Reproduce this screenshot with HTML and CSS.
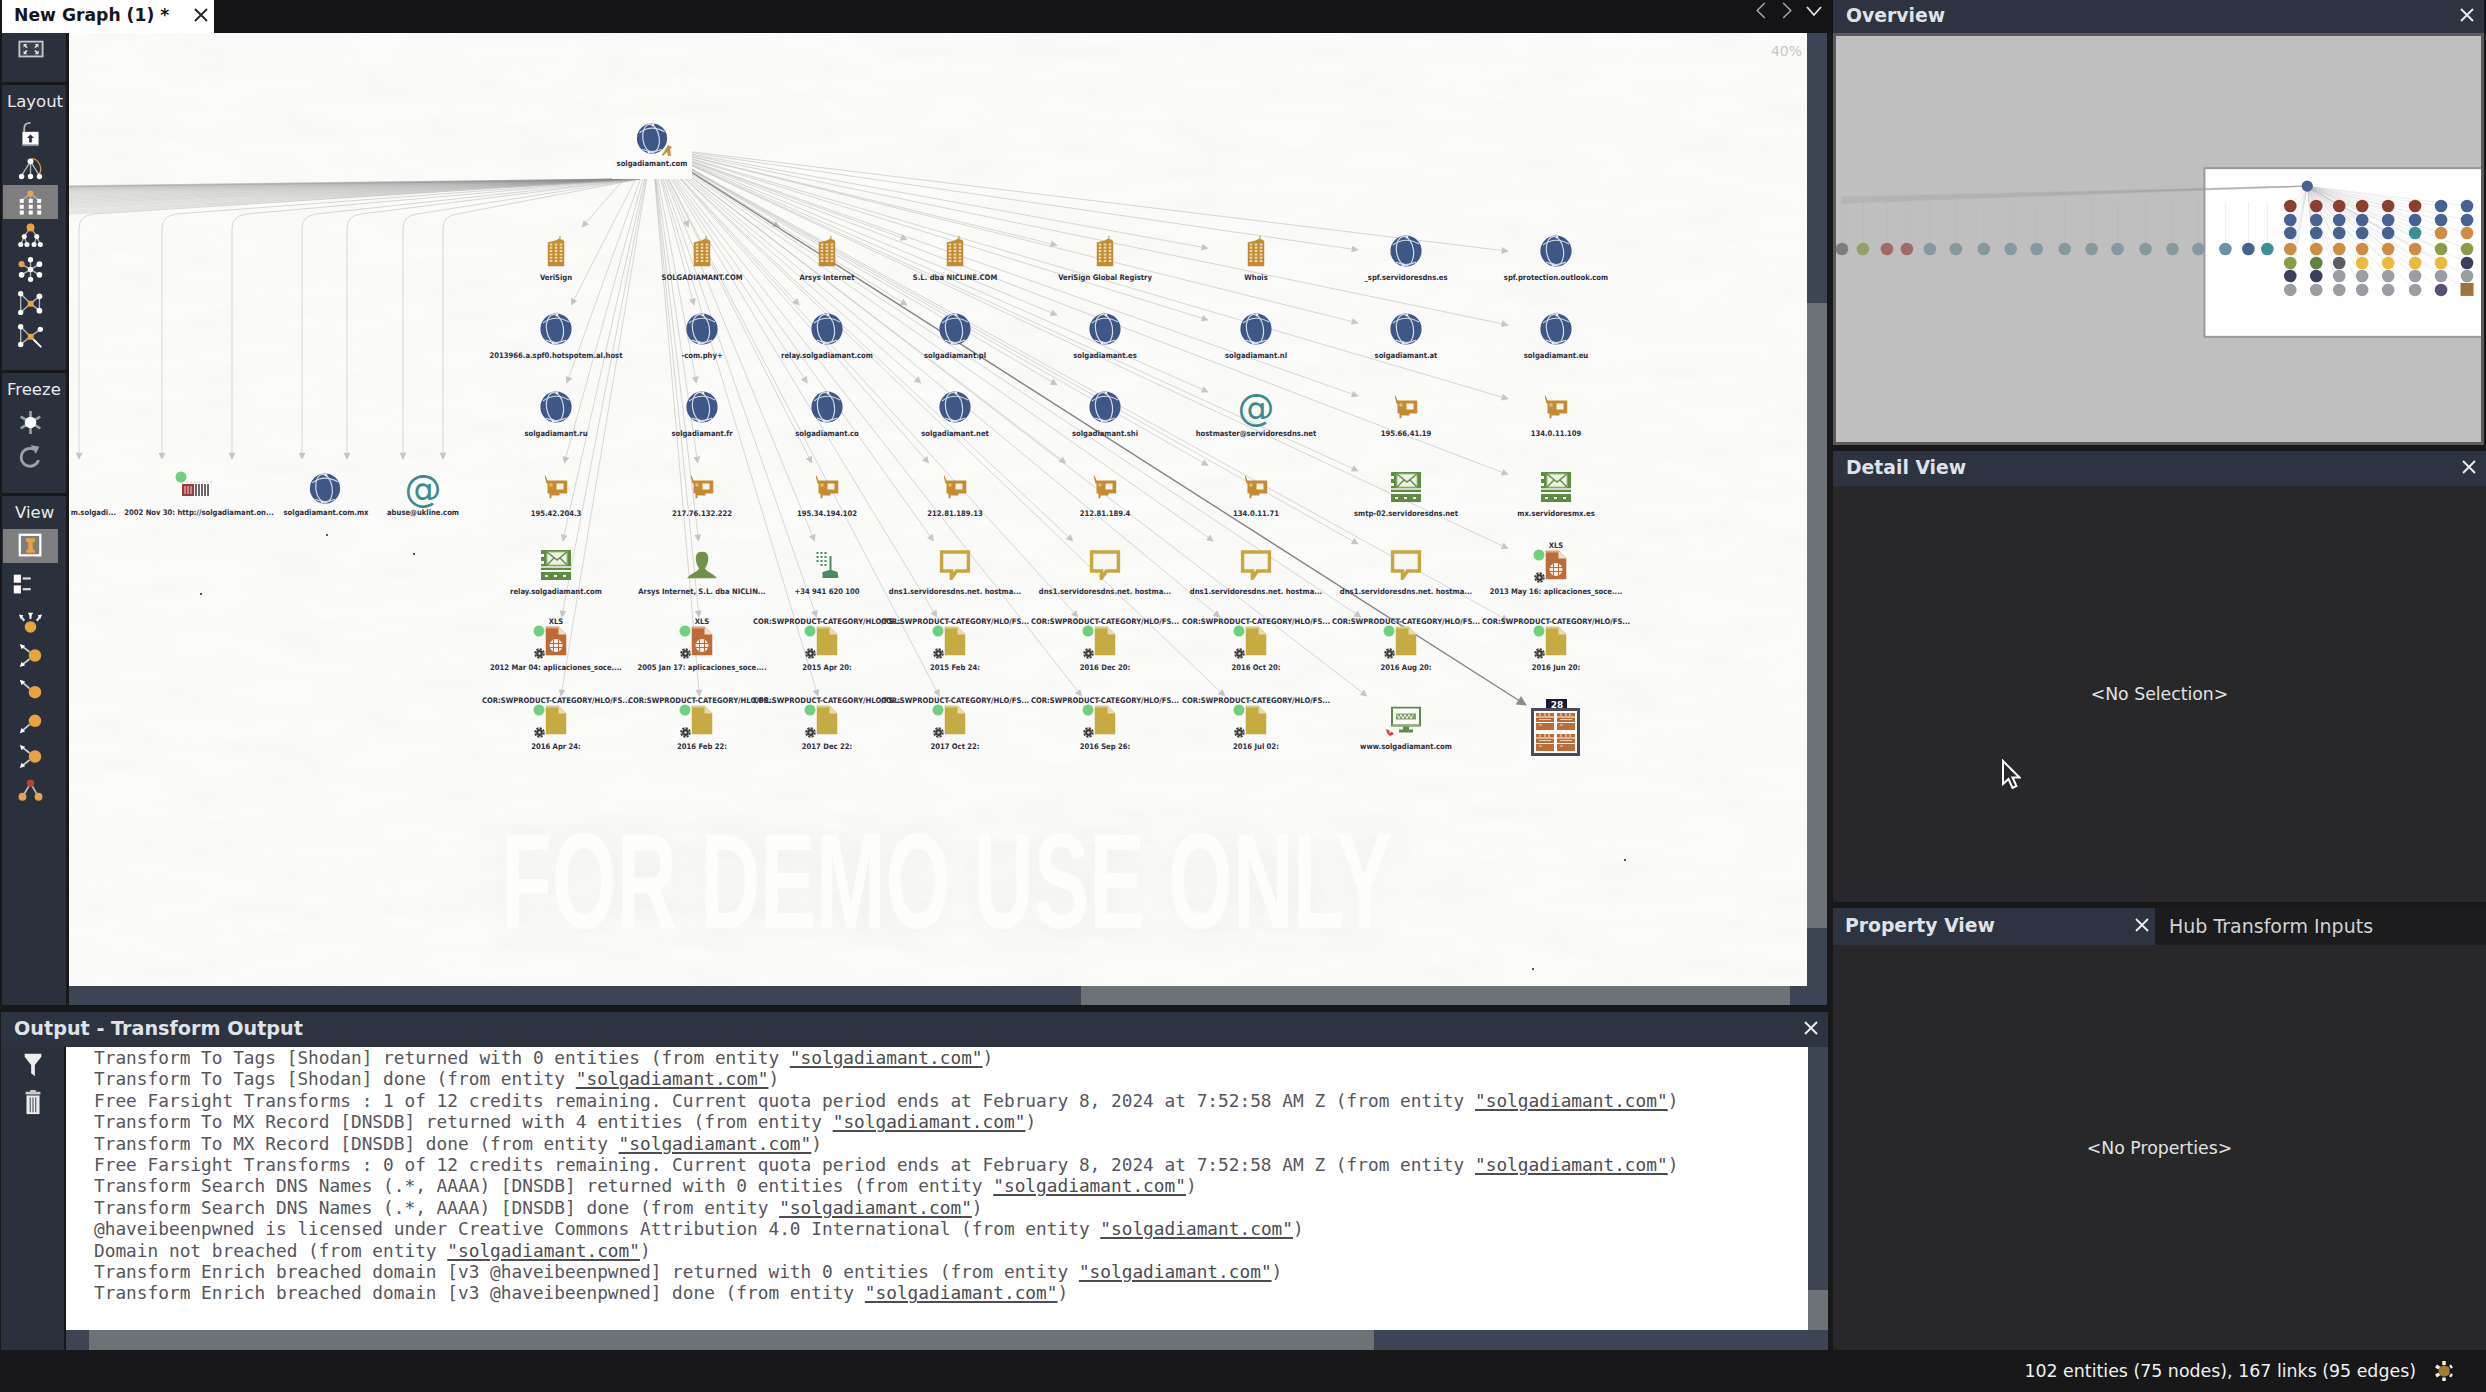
FILE: index.html
```html
<!DOCTYPE html>
<html lang="en">
<head>
    <meta charset="UTF-8">
    <title>New Graph (1) - Maltego</title>
    <link rel="stylesheet" href="styles.css">
</head>
<body>
    <!-- shared icons -->
    <svg class="icon-defs" aria-hidden="true">
        <defs>
            <filter id="paper" x="0" y="0" width="100%" height="100%">
                <feTurbulence type="fractalNoise" baseFrequency="0.012 0.05" numOctaves="4" seed="7"/>
                <feColorMatrix values="0 0 0 0 0.55  0 0 0 0 0.55  0 0 0 0 0.53  0 0 0 0.09 -0.03"/>
            </filter>
            <marker id="arrow" viewBox="0 0 10 10" refX="9" refY="5" markerWidth="9" markerHeight="7" markerUnits="userSpaceOnUse" orient="auto">
                <path d="M0 0L10 5L0 10z" fill="#c6c6c6"/>
            </marker>
            <marker id="arrow-dark" viewBox="0 0 10 10" refX="9" refY="5" markerWidth="11" markerHeight="10" markerUnits="userSpaceOnUse" orient="auto">
                <path d="M0 0L10 5L0 10z" fill="#8c8c8c"/>
            </marker>

            <!-- graph entity icons -->
            <symbol id="n-globe" viewBox="0 0 32 32">
                <circle cx="16" cy="16" r="15.6" fill="#3f5787"/>
                <g fill="none" stroke="#d5dbe6" stroke-width="1.200">
                    <ellipse cx="15" cy="16" rx="8.5" ry="14.6" transform="rotate(-8 15 16)"/>
                    <path d="M3 10Q15 1 29 9M6 27Q16 32 26 27"/>
                </g>
                <circle cx="17" cy="2" r="1.4" fill="#e8ecf2"/>
                <circle cx="13" cy="30" r="1.4" fill="#e8ecf2"/>
            </symbol>
            <symbol id="n-building" viewBox="0 0 17 31">
                <path d="M0 7L8 5L10 4L12 3V0H13V4H15L17 6V31H0z" fill="#c48b35"/>
                <path d="M3.5 8V27M8.5 8V27M13.5 8V27" stroke="#eed9ab" stroke-width="2.6" stroke-dasharray="2 1.3" fill="none"/>
            </symbol>
            <symbol id="n-card" viewBox="0 0 23 23">
                <path d="M0 0H1L3 5H23V18H15V20H7V23H5V18H3V8H2z" fill="#c78b2f"/>
                <rect x="12" y="8" width="7" height="6" fill="#f6f1e4"/>
                <rect x="5" y="8" width="3" height="3" fill="#e3bf7c"/>
            </symbol>
            <symbol id="n-mail" viewBox="0 0 30 30">
                <rect width="30" height="20" fill="#5e8c42"/>
                <path d="M0 4H3V7H0zM0 11H3V14H0z" fill="#fbfaf7"/>
                <rect x="6" y="2" width="20" height="13" fill="#eef1e7" stroke="#a8c08d"/>
                <path d="M6 2L16 10L26 2M6 15L13 8M26 15L19 8" stroke="#5e8c42" stroke-width="1.4" fill="none"/>
                <rect y="16" width="30" height="2" fill="#cfdcbf"/>
                <rect y="22" width="30" height="8" fill="#5e8c42"/>
                <path d="M4 25H7V27H4zM13 25H16V27H13zM22 25H25V27H22z" fill="#f2f4ec"/>
            </symbol>
            <symbol id="n-person" viewBox="0 0 30 27">
                <path d="M15 0C20 0 22 4 21 9C21 12 19 15 18 17C19 20 27 22 30 27H0C3 22 11 20 12 17C11 15 9 12 9 9C8 4 10 0 15 0z" fill="#6f9149"/>
            </symbol>
            <symbol id="n-phone" viewBox="0 0 23 26">
                <path d="M1 0h2v2h-2zM5 0h2v2h-2zM9 0h2v2h-2zM1 4h2v2h-2zM5 4h2v2h-2zM9 4h2v2h-2zM1 8h2v2h-2zM5 8h2v2h-2zM9 8h2v2h-2zM5 12h2v2h-2zM9 12h2v2h-2z" fill="#4d8a64"/>
                <path d="M14 4H16V18L22 20L23 26H7V20L14 18z" fill="#4d8a64"/>
            </symbol>
            <symbol id="n-bubble" viewBox="0 0 31 30">
                <path d="M2 2H29V21H17L12 28V21H2z" fill="#f8f7f2" stroke="#c6a83f" stroke-width="3.6"/>
            </symbol>
            <symbol id="n-doc" viewBox="0 0 21 29">
                <path d="M0 0H13L21 8V29H0z" fill="#c6aa42"/>
                <path d="M13 0L21 8H13z" fill="#e6dcae"/>
                <path d="M0 0H13V2H0z" fill="#dbcd90"/>
            </symbol>
            <symbol id="n-xls" viewBox="0 0 21 29">
                <path d="M0 0H13L21 8V29H0z" fill="#bd6c38"/>
                <path d="M13 0L21 8H13z" fill="#efdccd"/>
                <path d="M0 0H13V2H0z" fill="#d9a985"/>
                <circle cx="10.5" cy="19" r="6.5" fill="#f8eee6"/>
                <path d="M4 17H17M4 21H17M8 13V25M13 13V25" stroke="#bd6c38" stroke-width="1"/>
            </symbol>
            <symbol id="n-website" viewBox="0 0 30 27">
                <rect x="1" y="1" width="28" height="18" fill="#fbfbf8" stroke="#5f8a4a" stroke-width="2"/>
                <rect x="5" y="7" width="20" height="6" fill="#7d9f63"/>
                <path d="M6 8l2 4l2-4l2 4l2-4l2 4l2-4l2 4l2-4" stroke="#eef1e7" fill="none"/>
                <rect x="1" y="18" width="28" height="2" fill="#93ad7e"/>
                <path d="M12 20H18V23H22V26H8V23H12z" fill="#5f8a4a"/>
            </symbol>
            <symbol id="n-gear" viewBox="0 0 11 11">
                <circle cx="5.5" cy="5.5" r="3.400" fill="#3b3b3b"/>
                <circle cx="5.5" cy="5.5" r="4.400" fill="none" stroke="#3b3b3b" stroke-width="1.800" stroke-dasharray="2.200 1.200"/>
                <circle cx="5.5" cy="5.5" r="1.200" fill="#d8d8d8"/>
            </symbol>
            <symbol id="n-rack" viewBox="0 0 18 17">
                <path d="M0 0H18V17H0z" fill="#bd6c38"/>
                <path d="M0 4H18M0 9.5H18" stroke="#fbfaf7" stroke-width="1.2"/>
                <path d="M4 0V3M9 0V3M13 0V3M3 6.5H15M3 12H6" stroke="#ecd3bd" stroke-width="1.2"/>
            </symbol>

            <!-- toolbar icons -->
            <symbol id="t-fit" viewBox="0 0 28 20">
                <rect x="1.5" y="1.5" width="25" height="16" fill="#3a3f4a" stroke="#c4c6ca" stroke-width="2"/>
                <path d="M6 4h4l-1.500 1.500 2 2-1.500 1-2-2L6 8zM22 4h-4l1.500 1.500-2 2 1.500 1 2-2L22 8zM6 15h4l-1.500-1.500 2-2-1.500-1-2 2L6 11zM22 15h-4l1.500-1.500-2-2 1.500-1 2 2 1.500-1.500z" fill="#e4e4e6"/>
            </symbol>
            <symbol id="t-lock" viewBox="0 0 28 28">
                <path d="M7 12V7C7 3 10 1 14 1" fill="none" stroke="#b9bbc0" stroke-width="2"/>
                <rect x="5" y="11" width="18" height="15" fill="#fff"/>
                <rect x="5" y="25" width="18" height="2" fill="#8e9097"/>
                <path d="M14 14L18 18H15.500V23H12.500V18H10z" fill="#2b303c"/>
            </symbol>
            <symbol id="t-ring" viewBox="0 0 28 28">
                <path d="M14 6L4 22M14 6V22M14 6L24 22" stroke="#b4b6ba" stroke-width="1.5"/>
                <path d="M15 3C23 3 28 13 24 20" fill="none" stroke="#d89a45" stroke-width="1.4"/>
                <circle cx="14" cy="6" r="3.3" fill="#fff"/>
                <circle cx="4" cy="23" r="3" fill="#fff"/><circle cx="14" cy="23" r="3" fill="#fff"/><circle cx="24" cy="23" r="3" fill="#fff"/>
            </symbol>
            <symbol id="t-block" viewBox="0 0 28 28">
                <path d="M14 4L4 12M14 4V12M14 4L24 12" stroke="#b4b6ba" stroke-width="1.5"/>
                <circle cx="14" cy="4" r="3.400" fill="#eba243"/>
                <g fill="#fff">
                    <rect x="2" y="10" width="4.500" height="4.500"/><rect x="12" y="10" width="4.500" height="4.500"/><rect x="21.500" y="10" width="4.500" height="4.500"/>
                    <rect x="2" y="16.500" width="4.500" height="4.500"/><rect x="12" y="16.500" width="4.500" height="4.500"/><rect x="21.500" y="16.500" width="4.500" height="4.500"/>
                    <rect x="2" y="23" width="4.500" height="4.500"/><rect x="12" y="23" width="4.500" height="4.500"/><rect x="21.500" y="23" width="4.500" height="4.500"/>
                </g>
            </symbol>
            <symbol id="t-tree" viewBox="0 0 28 28">
                <path d="M14 5L7 15M14 5L21 15M7 15L3 24M7 15L10 24M21 15L18 24M21 15L25 24" stroke="#b4b6ba" stroke-width="1.4"/>
                <circle cx="14" cy="5" r="4.400" fill="#eba243"/>
                <circle cx="7" cy="15" r="2.800" fill="#fff"/><circle cx="21" cy="15" r="2.800" fill="#fff"/>
                <circle cx="3" cy="24" r="2.800" fill="#fff"/><circle cx="10" cy="24" r="2.800" fill="#fff"/><circle cx="18" cy="24" r="2.800" fill="#fff"/><circle cx="25" cy="24" r="2.800" fill="#fff"/>
            </symbol>
            <symbol id="t-organic" viewBox="0 0 28 28">
                <path d="M14 3V25M4 8L24 20M4 20L24 8" stroke="#b4b6ba" stroke-width="1.5"/>
                <circle cx="14" cy="3" r="3" fill="#fff"/><circle cx="14" cy="25" r="3" fill="#fff"/>
                <circle cx="24" cy="8" r="3.200" fill="#fff"/><circle cx="24" cy="20" r="3.200" fill="#fff"/><circle cx="4" cy="20" r="3.200" fill="#fff"/>
                <circle cx="14" cy="14" r="3" fill="#fff"/>
                <circle cx="4" cy="8" r="3.400" fill="#eba243"/>
            </symbol>
            <symbol id="t-bow" viewBox="0 0 28 28">
                <path d="M3 3L14 14L24 6M3 24L14 14L24 22M3 3V24M24 6V22" stroke="#b4b6ba" stroke-width="1.500" fill="none"/>
                <circle cx="3" cy="3" r="3" fill="#fff"/><circle cx="3" cy="24" r="3" fill="#fff"/>
                <circle cx="24" cy="6" r="3.200" fill="#fff"/><circle cx="24" cy="22" r="3.200" fill="#fff"/>
                <rect x="11" y="11" width="6.500" height="6.500" fill="#eba243"/>
            </symbol>
            <symbol id="t-star" viewBox="0 0 28 28">
                <path d="M3 3L14 14L25 6M3 23L14 14L26 26M3 3V23" stroke="#b4b6ba" stroke-width="1.500" fill="none"/>
                <circle cx="3" cy="3" r="3" fill="#fff"/><circle cx="3" cy="23" r="3" fill="#fff"/>
                <circle cx="25" cy="6" r="3" fill="#fff"/>
                <path d="M17 17L26 26" stroke="#fff" stroke-width="2"/>
                <rect x="11" y="11" width="6.500" height="6.500" fill="#eba243"/>
            </symbol>
            <symbol id="t-freeze" viewBox="0 0 28 28">
                <path d="M14 1V27M3 7.500L25 20.500M3 20.500L25 7.500" stroke="#9da0a6" stroke-width="3"/>
                <circle cx="14" cy="14" r="6.500" fill="#fff"/>
            </symbol>
            <symbol id="t-refresh" viewBox="0 0 28 28">
                <path d="M18 6A10 10 0 1 0 23 18" fill="none" stroke="#9da0a6" stroke-width="3.200"/>
                <path d="M14 1L24 3L20 11z" fill="#9da0a6"/>
            </symbol>
            <symbol id="t-main" viewBox="0 0 28 28">
                <rect x="2" y="2" width="23" height="23" fill="#7d7d7d" stroke="#fff" stroke-width="2.500"/>
                <path d="M9 6H19V10H16.500V18L19 20V22H9V20L11.500 18V10H9z" fill="#eba243"/>
            </symbol>
            <symbol id="t-list" viewBox="0 0 28 28">
                <rect x="2" y="3" width="8" height="9" fill="#fff"/><rect x="2" y="15" width="8" height="9" fill="#fff"/>
                <rect x="12" y="6" width="9" height="2.500" fill="#d8d9dc"/><rect x="12" y="18" width="9" height="2.500" fill="#d8d9dc"/>
            </symbol>
            <symbol id="t-up" viewBox="0 0 28 28">
                <circle cx="14" cy="19" r="6.500" fill="#eba243"/>
                <path d="M7 12L3 7M14 10V4M21 12L25 7" stroke="#e4e4e6" stroke-width="2.400"/>
                <path d="M1 5L6 6L3 10zM11 3H17L14 8zM27 5L22 6L25 10z" fill="#fff"/>
            </symbol>
            <symbol id="t-both" viewBox="0 0 28 28">
                <circle cx="19" cy="14" r="7" fill="#eba243"/>
                <path d="M13 10L4 3M13 18L4 25" stroke="#c9cacd" stroke-width="2"/>
                <path d="M2 1L8 3L4 7zM2 27L8 25L4 21z" fill="#fff"/>
            </symbol>
            <symbol id="t-in" viewBox="0 0 28 28">
                <circle cx="19" cy="17" r="7" fill="#eba243"/>
                <path d="M13 13L4 5" stroke="#c9cacd" stroke-width="2"/>
                <path d="M2 3L8 5L4 9z" fill="#fff"/>
            </symbol>
            <symbol id="t-out" viewBox="0 0 28 28">
                <circle cx="19" cy="11" r="7" fill="#eba243"/>
                <path d="M13 15L4 23" stroke="#c9cacd" stroke-width="2"/>
                <path d="M2 25L8 23L4 19z" fill="#fff"/>
            </symbol>
            <symbol id="t-parents" viewBox="0 0 28 28">
                <path d="M14 6L5 21M14 6L23 21" stroke="#b9bbc0" stroke-width="2"/>
                <circle cx="14" cy="6" r="4.200" fill="#b4452b"/>
                <circle cx="5" cy="21" r="4.400" fill="#eba243"/><circle cx="23" cy="21" r="4.400" fill="#eba243"/>
            </symbol>
            <symbol id="t-funnel" viewBox="0 0 20 28">
                <path d="M1 2H19V5L12 14V26L8 23V14L1 5z" fill="#eceded"/>
            </symbol>
            <symbol id="t-trash" viewBox="0 0 20 28">
                <path d="M7 1H13V3H18V6H2V3H7z" fill="#c9cacd"/>
                <rect x="3" y="7" width="14" height="20" fill="#eceded"/>
                <path d="M7 9V25M10 9V25M13 9V25" stroke="#2b303c"/>
            </symbol>
            <symbol id="i-close" viewBox="0 0 14 14">
                <path d="M1 1L13 13M13 1L1 13" stroke="#eceef0" stroke-width="1.900"/>
            </symbol>
            <symbol id="i-close-dark" viewBox="0 0 14 14">
                <path d="M1 1L13 13M13 1L1 13" stroke="#26262a" stroke-width="1.900"/>
            </symbol>
            <symbol id="i-prefuse" viewBox="0 0 24 24">
                <path d="M12 2V22M4 7L20 17M4 17L20 7" stroke="#f0f0f0" stroke-width="3.500" stroke-dasharray="4 1.500"/>
                <circle cx="12" cy="12" r="5.500" fill="#a27c2a"/>
            </symbol>
        </defs>
    </svg>

    <div class="workspace">
        <div class="left-side">
            <section class="graph-window">
                <header class="tab-bar">
                    <div class="graph-tab">
                        <span class="graph-tab-title">New Graph (1) *</span>
                        <svg class="tab-close"><use href="#i-close-dark"/></svg>
                    </div>
                    <div class="tab-nav">
                        <svg class="tab-nav-icon" viewBox="0 0 12 20"><path d="M10 2L2 10L10 18" fill="none" stroke="#a8aaae" stroke-width="1.500"/></svg>
                        <svg class="tab-nav-icon" viewBox="0 0 12 20"><path d="M2 2L10 10L2 18" fill="none" stroke="#a8aaae" stroke-width="1.500"/></svg>
                        <svg class="tab-nav-icon tab-nav-down" viewBox="0 0 18 12"><path d="M2 2L9 10L16 2" fill="none" stroke="#e6e6e8" stroke-width="1.800"/></svg>
                    </div>
                </header>
                <div class="graph-body">
                    <aside class="toolbar">
                        <div class="tool-group group-fit">
                            <button class="tool"><svg class="tool-icon-wide"><use href="#t-fit"/></svg></button>
                        </div>
                        <div class="tool-group group-layout">
                            <div class="tool-label">Layout</div>
                            <button class="tool"><svg class="tool-icon"><use href="#t-lock"/></svg></button>
                            <button class="tool"><svg class="tool-icon"><use href="#t-ring"/></svg></button>
                            <button class="tool active"><svg class="tool-icon"><use href="#t-block"/></svg></button>
                            <button class="tool"><svg class="tool-icon"><use href="#t-tree"/></svg></button>
                            <button class="tool"><svg class="tool-icon"><use href="#t-organic"/></svg></button>
                            <button class="tool"><svg class="tool-icon"><use href="#t-bow"/></svg></button>
                            <button class="tool"><svg class="tool-icon"><use href="#t-star"/></svg></button>
                        </div>
                        <div class="tool-group group-freeze">
                            <div class="tool-label">Freeze</div>
                            <button class="tool"><svg class="tool-icon"><use href="#t-freeze"/></svg></button>
                            <button class="tool"><svg class="tool-icon"><use href="#t-refresh"/></svg></button>
                        </div>
                        <div class="tool-group group-view">
                            <div class="tool-label">View</div>
                            <button class="tool active"><svg class="tool-icon"><use href="#t-main"/></svg></button>
                            <button class="tool spaced tool-list"><svg class="tool-icon"><use href="#t-list"/></svg></button>
                            <button class="tool spaced"><svg class="tool-icon"><use href="#t-up"/></svg></button>
                            <button class="tool"><svg class="tool-icon"><use href="#t-both"/></svg></button>
                            <button class="tool"><svg class="tool-icon"><use href="#t-in"/></svg></button>
                            <button class="tool"><svg class="tool-icon"><use href="#t-out"/></svg></button>
                            <button class="tool"><svg class="tool-icon"><use href="#t-both"/></svg></button>
                            <button class="tool"><svg class="tool-icon"><use href="#t-parents"/></svg></button>
                        </div>
                    </aside>
                    <div class="graph-pane">
                        <div class="graph-row">
                            <div class="graph-canvas">
                                <svg id="graph" class="graph-svg" viewBox="69 33 1738 953"></svg>
                                <span class="zoom-level">40%</span>
                            </div>
                            <div class="vscroll vscroll-graph"><div class="scroll-thumb"></div></div>
                        </div>
                        <div class="hscroll hscroll-graph"><div class="scroll-thumb"></div></div>
                    </div>
                </div>
            </section>

            <section class="output-panel">
                <header class="panel-header output-header">
                    <span class="panel-title">Output - Transform Output</span>
                    <svg class="panel-close"><use href="#i-close"/></svg>
                </header>
                <div class="output-body">
                    <aside class="output-tools">
                        <svg class="output-tool"><use href="#t-funnel"/></svg>
                        <svg class="output-tool"><use href="#t-trash"/></svg>
                    </aside>
                    <div class="output-pane">
                        <div class="output-row">
                            <div class="output-log">
                                <div>Transform To Tags [Shodan] returned with 0 entities (from entity <a>"solgadiamant.com"</a>)</div>
                                <div>Transform To Tags [Shodan] done (from entity <a>"solgadiamant.com"</a>)</div>
                                <div>Free Farsight Transforms : 1 of 12 credits remaining. Current quota period ends at February 8, 2024 at 7:52:58 AM Z (from entity <a>"solgadiamant.com"</a>)</div>
                                <div>Transform To MX Record [DNSDB] returned with 4 entities (from entity <a>"solgadiamant.com"</a>)</div>
                                <div>Transform To MX Record [DNSDB] done (from entity <a>"solgadiamant.com"</a>)</div>
                                <div>Free Farsight Transforms : 0 of 12 credits remaining. Current quota period ends at February 8, 2024 at 7:52:58 AM Z (from entity <a>"solgadiamant.com"</a>)</div>
                                <div>Transform Search DNS Names (.*, AAAA) [DNSDB] returned with 0 entities (from entity <a>"solgadiamant.com"</a>)</div>
                                <div>Transform Search DNS Names (.*, AAAA) [DNSDB] done (from entity <a>"solgadiamant.com"</a>)</div>
                                <div>@haveibeenpwned is licensed under Creative Commons Attribution 4.0 International (from entity <a>"solgadiamant.com"</a>)</div>
                                <div>Domain not breached (from entity <a>"solgadiamant.com"</a>)</div>
                                <div>Transform Enrich breached domain [v3 @haveibeenpwned] returned with 0 entities (from entity <a>"solgadiamant.com"</a>)</div>
                                <div>Transform Enrich breached domain [v3 @haveibeenpwned] done (from entity <a>"solgadiamant.com"</a>)</div>
                            </div>
                            <div class="vscroll vscroll-output"><div class="scroll-thumb"></div></div>
                        </div>
                        <div class="hscroll hscroll-output"><div class="scroll-thumb"></div></div>
                    </div>
                </div>
            </section>
        </div>

        <div class="right-side">
            <section class="side-panel overview-panel">
                <header class="panel-header">
                    <span class="panel-title">Overview</span>
                    <svg class="panel-close"><use href="#i-close"/></svg>
                </header>
                <div class="overview-frame">
                    <svg id="overview" class="overview-svg" viewBox="1836 36 646 406"></svg>
                </div>
            </section>
            <section class="side-panel detail-panel">
                <header class="panel-header">
                    <span class="panel-title">Detail View</span>
                    <svg class="panel-close"><use href="#i-close"/></svg>
                </header>
                <div class="empty-pane">&lt;No Selection&gt;</div>
            </section>
            <section class="side-panel property-panel">
                <header class="property-tabs">
                    <div class="panel-header property-tab">
                        <span class="panel-title">Property View</span>
                        <svg class="panel-close"><use href="#i-close"/></svg>
                    </div>
                    <div class="hub-tab">Hub Transform Inputs</div>
                </header>
                <div class="empty-pane">&lt;No Properties&gt;</div>
            </section>
        </div>
    </div>

    <footer class="status-bar">
        <span class="status-text">102 entities (75 nodes), 167 links (95 edges)</span>
        <svg class="status-icon"><use href="#i-prefuse"/></svg>
    </footer>

    <svg class="mouse-cursor" viewBox="0 0 20 31"><path d="M2 2V25L7.500 20L11.500 29L15.500 27L11.500 18.500H18.500z" fill="#26282c" stroke="#fff" stroke-width="2"/></svg>

    <script src="graph.js"></script>
</body>
</html>
```

FILE: styles.css
```css
:root {
    --color-bg: #18181a;
    --color-toolbar: #2a303c;
    --color-header: #2d3340;
    --color-track: #3d4454;
    --color-thumb: #6d7276;
    --color-pane: #28282a;
    --color-paper: #fbfbf9;
    --color-accent: #7e7e7e;
}

* {
    box-sizing: border-box;
}

body {
    margin: 0;
    width: 2486px;
    height: 1392px;
    overflow: hidden;
    position: relative;
    display: flex;
    flex-direction: column;
    background: var(--color-bg);
    font-family: "DejaVu Sans", sans-serif;
    color: #eceef0;
}

.icon-defs {
    position: absolute;
    width: 0;
    height: 0;
}

.workspace {
    display: flex;
    height: 1350px;
    flex: none;
}

.left-side {
    width: 1833px;
    display: flex;
    flex-direction: column;
    gap: 7px;
}

/* tab bar */
.graph-window {
    height: 1005px;
    display: flex;
    flex-direction: column;
    padding-left: 2px;
}

.tab-bar {
    height: 33px;
    flex: none;
    display: flex;
    justify-content: space-between;
    background: #141416;
}

.graph-tab {
    width: 212px;
    display: flex;
    align-items: center;
    justify-content: space-between;
    padding: 0 6px 3px 12px;
    background: #fff;
    color: #16161a;
}

.graph-tab-title {
    font-size: 17.200px;
    font-weight: bold;
    white-space: nowrap;
}

.tab-close {
    width: 14px;
    height: 14px;
}

.tab-nav {
    display: flex;
    align-items: flex-start;
    gap: 14px;
    padding: 1px 10px 0 0;
}

.tab-nav-icon {
    width: 12px;
    height: 19px;
}

.tab-nav-down {
    width: 18px;
    height: 12px;
    margin: 4px 0 0 -2px;
}

/* left toolbar */
.graph-body {
    flex: 1;
    display: flex;
    min-height: 0;
}

.toolbar {
    width: 67px;
    display: flex;
    flex-direction: column;
    gap: 3px;
    padding-right: 3px;
}

.tool-group {
    background: var(--color-toolbar);
    display: flex;
    flex-direction: column;
    padding-left: 1px;
}

.group-fit {
    height: 49px;
}

.group-layout {
    height: 285px;
}

.group-freeze {
    height: 120px;
}

.group-view {
    flex: 1;
}

.tool-label {
    height: 33px;
    padding-left: 4px;
    font-size: 16.500px;
    line-height: 33px;
    color: #e8eaee;
}

.group-view .tool-label {
    padding-left: 12px;
}

.tool {
    width: 55px;
    height: 33.7px;
    flex: none;
    padding: 0;
    border: 0;
    background: none;
    display: flex;
    align-items: center;
    justify-content: center;
}

.tool.active {
    background: var(--color-accent);
}

.tool.spaced {
    margin-top: 4.5px;
}

.tool-list .tool-icon {
    margin-left: -12px;
}

.tool-icon {
    width: 25px;
    height: 25px;
}

.tool-icon-wide {
    width: 26px;
    height: 19px;
}

/* graph canvas */
.graph-pane {
    flex: 1;
    display: flex;
    flex-direction: column;
    min-width: 0;
    padding-right: 6px;
}

.graph-row {
    flex: 1;
    display: flex;
    min-height: 0;
}

.graph-canvas {
    flex: 1;
    position: relative;
    background: var(--color-paper);
    overflow: hidden;
}

.graph-svg {
    display: block;
    width: 100%;
    height: 100%;
}

.zoom-level {
    position: absolute;
    top: 10px;
    right: 5px;
    font-size: 14px;
    color: #c8c8c6;
}

.edge {
    fill: none;
    stroke: rgba(165, 165, 165, 0.42);
    stroke-width: 1;
}

.edge-bundle {
    fill: none;
    stroke: rgba(140, 140, 140, 0.2);
    stroke-width: 1.6;
}

.edge-heavy {
    fill: none;
    stroke: #858585;
    stroke-width: 1.4;
}

.root-mask {
    fill: var(--color-paper);
}

.speck {
    fill: #55555a;
}

.watermark {
    font-family: "Liberation Sans", sans-serif;
    font-weight: bold;
    font-size: 136px;
    fill: #fdfdfc;
    filter: drop-shadow(0 0 16px rgba(90, 90, 85, 0.06));
}

.node-label {
    font-family: "DejaVu Sans Condensed", "DejaVu Sans", sans-serif;
    font-weight: bold;
    font-size: 7.6px;
    fill: #2f2e42;
    text-anchor: middle;
}

.node-label-end {
    text-anchor: end;
}

.node-at {
    font-family: "DejaVu Sans", sans-serif;
    font-size: 37px;
    fill: #3d8b8c;
    text-anchor: middle;
}

.state-dot {
    fill: #6fd17f;
}

.collection-box {
    fill: #fbfaf7;
    stroke: #484c58;
    stroke-width: 3;
}

.collection-badge {
    fill: #161c33;
}

.collection-count {
    font-family: "DejaVu Sans", sans-serif;
    font-weight: bold;
    font-size: 9px;
    fill: #fff;
    text-anchor: middle;
}

/* scrollbars */
.vscroll {
    width: 20px;
    background: var(--color-track);
    position: relative;
}

.hscroll {
    height: 19px;
    background: var(--color-track);
    position: relative;
}

.scroll-thumb {
    position: absolute;
    background: var(--color-thumb);
}

.vscroll-graph .scroll-thumb {
    left: 0;
    right: 0;
    top: 270px;
    height: 625px;
}

.hscroll-graph .scroll-thumb {
    top: 0;
    bottom: 0;
    left: 1012px;
    width: 709px;
}

.vscroll-output .scroll-thumb {
    left: 0;
    right: 0;
    bottom: 0;
    height: 40px;
}

.hscroll-output {
    height: 20px;
}

.hscroll-output .scroll-thumb {
    top: 0;
    bottom: 0;
    left: 23px;
    width: 1285px;
}

/* output panel */
.output-panel {
    flex: 1;
    display: flex;
    flex-direction: column;
    min-height: 0;
    padding: 0 5px 0 1px;
}

.panel-header {
    height: 35px;
    flex: none;
    display: flex;
    align-items: center;
    justify-content: space-between;
    background: var(--color-header);
    padding: 0 4px 3px 13px;
}

.panel-title {
    font-size: 18.800px;
    font-weight: bold;
    color: #dfe2e8;
}

.output-header .panel-title {
    font-size: 19.200px;
}

.panel-close {
    width: 14px;
    height: 14px;
    margin-right: 6px;
}

.output-body {
    flex: 1;
    display: flex;
    min-height: 0;
}

.output-tools {
    width: 65px;
    flex: none;
    background: var(--color-toolbar);
    border-right: 2px solid var(--color-bg);
    display: flex;
    flex-direction: column;
    align-items: center;
    gap: 11px;
    padding-top: 5px;
}

.output-tool {
    width: 20px;
    height: 26px;
}

.output-pane {
    flex: 1;
    display: flex;
    flex-direction: column;
    min-width: 0;
}

.output-row {
    flex: 1;
    display: flex;
    min-height: 0;
}

.output-log {
    flex: 1;
    background: #fff;
    padding-left: 28px;
    font-family: "DejaVu Sans Mono", monospace;
    font-size: 17.800px;
    line-height: 21.400px;
    color: #56565c;
    overflow: hidden;
}

.output-log div {
    white-space: pre;
}

.output-log a {
    color: #4c4c52;
    text-decoration: underline;
    text-decoration-thickness: 2px;
    text-underline-offset: 2px;
}

/* right panels */
.right-side {
    flex: 1;
    display: flex;
    flex-direction: column;
    gap: 6px;
    min-width: 0;
}

.side-panel {
    display: flex;
    flex-direction: column;
}

.overview-panel {
    height: 445px;
    padding-right: 2px;
}

.overview-panel .panel-header {
    height: 33px;
}

.overview-frame {
    flex: 1;
    border: 3px solid #5a5a5a;
    background: #bfbfbf;
    min-height: 0;
}

.overview-svg {
    display: block;
    width: 100%;
    height: 100%;
}

.mini-edge {
    stroke: rgba(170, 170, 170, 0.22);
    stroke-width: 1;
}

.mini-drop {
    stroke: rgba(160, 160, 160, 0.16);
    stroke-width: 1.400;
}

.mini-view {
    fill: #fff;
    stroke: #999;
    stroke-width: 2;
}

.detail-panel {
    height: 451px;
    background: var(--color-pane);
}

.empty-pane {
    flex: 1;
    display: flex;
    align-items: center;
    justify-content: center;
    background: var(--color-pane);
    font-size: 17.300px;
    color: #e2e2e4;
}

.property-panel {
    flex: 1;
    min-height: 0;
}

.property-tabs {
    display: flex;
    height: 37px;
    flex: none;
}

.property-tab {
    width: 322px;
    height: 37px;
    padding-left: 12px;
}

.property-tab .panel-close {
    margin-right: 2px;
}

.hub-tab {
    flex: 1;
    padding-left: 14px;
    font-size: 19px;
    line-height: 37px;
    color: #d0d2d6;
    background: #1c1c1f;
}

/* status bar */
.status-bar {
    flex: 1;
    display: flex;
    align-items: center;
    justify-content: flex-end;
    gap: 16px;
    padding-right: 30px;
}

.status-text {
    font-size: 17.400px;
    color: #f0f0f0;
}

.status-icon {
    width: 24px;
    height: 24px;
}

/* pointer captured in the screenshot */
.mouse-cursor {
    position: absolute;
    left: 2001px;
    top: 759px;
    width: 20px;
    height: 31px;
}
```

FILE: graph.js
```js
// Draws the graph canvas and the overview from plain data. Coordinates are page pixels.
const COLS = [556, 702, 827, 955, 1105, 1256, 1406, 1556];
const ROWS = [251, 329, 407, 487, 565, 641, 720];
const ROOT = { x: 652, y: 147 };

const ICONS = {
    globe: ['n-globe', 32, 32],
    building: ['n-building', 17, 31],
    card: ['n-card', 23, 23],
    mail: ['n-mail', 30, 30],
    person: ['n-person', 30, 27],
    phone: ['n-phone', 23, 26],
    bubble: ['n-bubble', 31, 30],
    doc: ['n-doc', 21, 29],
    xls: ['n-xls', 21, 29],
    website: ['n-website', 30, 27]
};

const TOP_DOC = 'COR:SWPRODUCT-CATEGORY/HLO/FS...';

const GRID = [
    [['building', 'VeriSign'], ['building', 'SOLGADIAMANT.COM'], ['building', 'Arsys Internet'], ['building', 'S.L. dba NICLINE.COM'], ['building', 'VeriSign Global Registry'], ['building', 'Whois'], ['globe', '_spf.servidoresdns.es'], ['globe', 'spf.protection.outlook.com']],
    [['globe', '2013966.a.spf0.hotspotem.al.host'], ['globe', '-com.phy+'], ['globe', 'relay.solgadiamant.com'], ['globe', 'solgadiamant.pl'], ['globe', 'solgadiamant.es'], ['globe', 'solgadiamant.nl'], ['globe', 'solgadiamant.at'], ['globe', 'solgadiamant.eu']],
    [['globe', 'solgadiamant.ru'], ['globe', 'solgadiamant.fr'], ['globe', 'solgadiamant.co'], ['globe', 'solgadiamant.net'], ['globe', 'solgadiamant.shi'], ['at', 'hostmaster@servidoresdns.net'], ['card', '195.66.41.19'], ['card', '134.0.11.109']],
    [['card', '195.42.204.3'], ['card', '217.76.132.222'], ['card', '195.34.194.102'], ['card', '212.81.189.13'], ['card', '212.81.189.4'], ['card', '134.0.11.71'], ['mail', 'smtp-02.servidoresdns.net'], ['mail', 'mx.servidoresmx.es']],
    [['mail', 'relay.solgadiamant.com'], ['person', 'Arsys Internet, S.L. dba NICLIN...'], ['phone', '+34 941 620 100'], ['bubble', 'dns1.servidoresdns.net. hostma...'], ['bubble', 'dns1.servidoresdns.net. hostma...'], ['bubble', 'dns1.servidoresdns.net. hostma...'], ['bubble', 'dns1.servidoresdns.net. hostma...'], ['xls', '2013 May 16: aplicaciones_soce....', 'XLS']],
    [['xls', '2012 Mar 04: aplicaciones_soce....', 'XLS'], ['xls', '2005 Jan 17: aplicaciones_soce....', 'XLS'], ['doc', '2015 Apr 20:', TOP_DOC], ['doc', '2015 Feb 24:', TOP_DOC], ['doc', '2016 Dec 20:', TOP_DOC], ['doc', '2016 Oct 20:', TOP_DOC], ['doc', '2016 Aug 20:', TOP_DOC], ['doc', '2016 Jun 20:', TOP_DOC]],
    [['doc', '2016 Apr 24:', TOP_DOC], ['doc', '2016 Feb 22:', TOP_DOC], ['doc', '2017 Dec 22:', TOP_DOC], ['doc', '2017 Oct 22:', TOP_DOC], ['doc', '2016 Sep 26:', TOP_DOC], ['doc', '2016 Jul 02:', TOP_DOC], ['website', 'www.solgadiamant.com'], ['collection', '']]
];

const DROP_XS = [79, 162, 232, 302, 347, 403, 443];
const SPECKS = [[1624, 859], [1532, 968], [326, 534], [413, 553], [200, 593]];

function use(id, x, y, w, h) {
    return `<use href="#${id}" x="${x}" y="${y}" width="${w}" height="${h}"/>`;
}

function label(x, y, text) {
    return `<text class="node-label" x="${x}" y="${y + 3}">${text}</text>`;
}

function drawGraph() {
    let edges = '';
    let nodes = '';

    // bundle running off to the left of the canvas
    for (let i = 0; i < 26; i++) {
        const y = 186 + Math.pow(i / 25, 1.6) * 28;
        edges += `<path class="edge-bundle" d="M640 179L69 ${y.toFixed(1)}"/>`;
    }
    DROP_XS.forEach(x => {
        edges += `<path class="edge" marker-end="url(#arrow)" d="M640 179L${x + 14} 214Q${x} 216 ${x} 228V459"/>`;
    });

    GRID.forEach((row, r) => {
        row.forEach((cell, c) => {
            const x = COLS[c];
            const y = ROWS[r];
            const dx = x - ROOT.x;
            const dy = y + 6 - ROOT.y;
            const t = Math.min(48 / Math.abs(dx || 1), 30 / Math.abs(dy));
            const ex = (x - dx * t).toFixed(1);
            const ey = (y + 6 - dy * t).toFixed(1);
            if (cell[0] === 'collection') {
                edges += `<path class="edge-heavy" marker-end="url(#arrow-dark)" d="M${ROOT.x} ${ROOT.y}L1526 705"/>`;
            } else {
                edges += `<path class="edge" marker-end="url(#arrow)" d="M${ROOT.x} ${ROOT.y}L${ex} ${ey}"/>`;
            }
            nodes += drawNode(cell, x, y, r);
        });
    });

    const specks = SPECKS.map(s => `<rect class="speck" x="${s[0]}" y="${s[1]}" width="2" height="2"/>`).join('');

    const extras =
        `<rect class="root-mask" x="612" y="118" width="80" height="61"/>` +
        use('n-globe', 636, 123, 32, 31) +
        `<path d="M668 145L672 147L670 149L671 156H668L667 152L663 156L662 155L665 150z" fill="#c98e3a"/>` +
        label(652, 163, 'solgadiamant.com') +
        // left hand row, mostly off the canvas
        `<text class="node-label node-label-end" x="116" y="515">m.solgadi...</text>` +
        `<circle class="state-dot" cx="181" cy="477" r="5.500"/>` +
        `<path d="M186 482H212" stroke="#c8c8c8" stroke-dasharray="2 2"/>` +
        `<path d="M182 484H194V496H182z" fill="#9d3a3f"/><path d="M185 486V494M188 486V494M191 486V494" stroke="#e8d8d8"/>` +
        `<path d="M196 484V496M199 484V496M202 484V496M205 484V496M208 484V496" stroke="#3a3a40" stroke-width="1.500"/>` +
        label(199, 512, '2002 Nov 30: http://solgadiamant.on...') +
        use('n-globe', 309, 473, 32, 31) +
        label(326, 512, 'solgadiamant.com.mx') +
        `<text class="node-at" x="423" y="501">@</text>` +
        label(423, 512, 'abuse@ukline.com');

    const watermark = `<text class="watermark" x="501" y="928" textLength="891" lengthAdjust="spacingAndGlyphs">FOR DEMO USE ONLY</text>`;
    const paper = `<rect x="69" y="33" width="1738" height="953" filter="url(#paper)"/>`;

    document.getElementById('graph').innerHTML = paper + watermark + specks + edges + extras + nodes;
}

function drawNode(cell, x, y, r) {
    const type = cell[0];
    let out = '';
    if (type === 'collection') {
        out += `<rect class="collection-badge" x="1546" y="699" width="21" height="11"/>`;
        out += `<text class="collection-count" x="1557" y="708">28</text>`;
        out += `<rect class="collection-box" x="1532.500" y="709.500" width="46" height="45"/>`;
        out += use('n-rack', 1536, 713, 18, 17) + use('n-rack', 1557, 713, 18, 17);
        out += use('n-rack', 1536, 734, 18, 17) + use('n-rack', 1557, 734, 18, 17);
        return out;
    }
    if (type === 'at') {
        out += `<text class="node-at" x="${x}" y="${y + 13}">@</text>`;
    } else {
        const icon = ICONS[type];
        out += use(icon[0], x - icon[1] / 2, y - icon[2] / 2, icon[1], icon[2]);
    }
    if (cell[2]) {
        out += label(x, ROWS[r] - 20, cell[2]);
        out += `<circle class="state-dot" cx="${x - 17}" cy="${y - 10}" r="5.500"/>`;
        out += use('n-gear', x - 22, y + 7, 11, 11);
    }
    if (type === 'website') {
        out += `<path d="M1386 729L1390 731L1389 733L1392 732L1394 734L1390 736L1387 733z" fill="#e8343f"/>`;
    }
    out += label(x, y + 26, cell[1]);
    return out;
}

const MINI_COLS = [2291, 2317, 2340, 2363, 2389, 2416, 2442, 2468];
const MINI_ROWS = [206, 220, 233, 249, 263, 276, 290];
const B = '#466292', R = '#8a3f31', O = '#cf8c45', V = '#8a9c45', Y = '#ecb93c', N = '#3a4059', G = '#9a9ea3';
const MINI_GRID = [
    [R, R, R, R, R, R, B, B],
    [B, B, B, B, B, B, B, B],
    [B, B, B, B, B, '#3a9096', O, O],
    [O, O, O, O, O, O, V, V],
    [V, '#5f8442', '#5b5e63', Y, Y, Y, Y, N],
    [N, N, G, G, G, G, G, G],
    [G, G, G, G, G, G, '#5a5070', 'box']
];
const MINI_LEFT = [
    [1842, '#7d7d7d'], [1863, '#93a06c'], [1887, '#a06a68'], [1907, '#a06a68'], [1930, '#86999f'], [1956, '#86999f'],
    [1984, '#86999f'], [2011, '#86999f'], [2037, '#86999f'], [2065, '#86999f'], [2092, '#86999f'], [2118, '#86999f'],
    [2146, '#86999f'], [2173, '#86999f'], [2199, '#86999f'], [2226, '#6a93a5'], [2249, B], [2268, '#3a9096']
];

function drawOverview() {
    const rootX = 2308;
    const rootY = 186;
    let lines = '';
    let dots = '';
    let band = '';

    for (let i = 0; i < 10; i++) {
        band += `<path class="mini-drop" d="M${rootX} ${rootY}L1842 ${197 + i * 0.7}"/>`;
    }
    MINI_LEFT.forEach(d => {
        lines += `<path class="mini-edge" d="M${d[0]} 202V243"/>`;
        dots += `<circle cx="${d[0]}" cy="249" r="6.300" fill="${d[1]}"/>`;
    });
    MINI_GRID.forEach((row, r) => {
        row.forEach((color, c) => {
            const x = MINI_COLS[c];
            const y = MINI_ROWS[r];
            lines += `<path class="mini-edge" d="M${rootX} ${rootY}L${x} ${y}"/>`;
            if (color === 'box') {
                dots += `<rect x="${x - 6.500}" y="${y - 7}" width="13" height="13" fill="#9c733c"/>`;
            } else {
                dots += `<circle cx="${x}" cy="${y}" r="6.300" fill="${color}"/>`;
            }
        });
    });

    document.getElementById('overview').innerHTML =
        `<rect class="mini-view" x="2205" y="168" width="290" height="169"/>` +
        band + lines + dots +
        `<circle cx="${rootX}" cy="${rootY}" r="5.600" fill="${B}"/>`;
}

drawGraph();
drawOverview();
```
